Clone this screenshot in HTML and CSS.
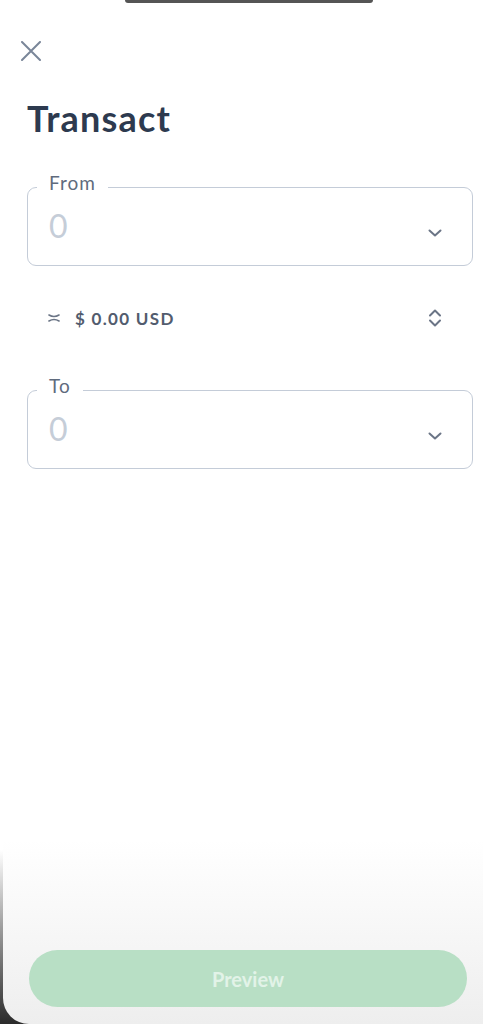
FILE: index.html
```html
<!DOCTYPE html>
<html lang="en">
  <head>
    <meta charset="UTF-8" />
    <meta name="viewport" content="width=device-width, initial-scale=1" />
    <title>Transact</title>
    <link rel="stylesheet" href="styles.css">
  </head>
  <body>
    <div class="screen">
      <div class="notch"></div>

      <button class="close-btn" type="button" aria-label="Close">
        <svg width="20" height="20" viewBox="0 0 20 20" fill="none" stroke="currentColor" stroke-width="2" stroke-linecap="round">
          <path d="M1 1 L19 19 M19 1 L1 19" />
        </svg>
      </button>

      <h1 class="title">Transact</h1>

      <fieldset class="amount-field">
        <legend>From</legend>
        <div class="amount-row">
          <span class="amount-value">0</span>
          <svg class="chevron" width="14" height="8" viewBox="0 0 14 8" fill="none" stroke="currentColor" stroke-width="2" stroke-linecap="round" stroke-linejoin="round">
            <path d="M1.5 1.5 L7 6.5 L12.5 1.5" />
          </svg>
        </div>
      </fieldset>

      <div class="rate-row">
        <svg class="approx" width="12" height="10" viewBox="0 0 12 10" fill="none" stroke="currentColor" stroke-width="1.6" stroke-linecap="round">
          <path d="M1 2 Q6 5 11 2" />
          <path d="M1 8 Q6 5 11 8" />
        </svg>
        <span class="rate-text">$ 0.00 USD</span>
        <svg class="swap" width="14" height="18" viewBox="0 0 14 18" fill="none" stroke="currentColor" stroke-width="2" stroke-linecap="round" stroke-linejoin="round">
          <path d="M2 6.5 L7 1.5 L12 6.5" />
          <path d="M2 11.5 L7 16.5 L12 11.5" />
        </svg>
      </div>

      <fieldset class="amount-field">
        <legend>To</legend>
        <div class="amount-row">
          <span class="amount-value">0</span>
          <svg class="chevron" width="14" height="8" viewBox="0 0 14 8" fill="none" stroke="currentColor" stroke-width="2" stroke-linecap="round" stroke-linejoin="round">
            <path d="M1.5 1.5 L7 6.5 L12.5 1.5" />
          </svg>
        </div>
      </fieldset>

      <button class="preview-btn" type="button" disabled>Preview</button>
    </div>
  </body>
</html>
```

FILE: styles.css
```css
:root {
  --ink: #2d3a4f;
  --muted: #5f6b7d;
  --icon: #6b7586;
  --placeholder: #c5cdd8;
  --border: #c4ccd8;
  --green: #b8dfc5;
}

* {
  box-sizing: border-box;
}

html,
body {
  height: 100%;
}

body {
  margin: 0;
  background: linear-gradient(to bottom, #fff 0, #fff 850px, #9a9a9a 930px, #2a2a2a 1024px);
  font-family: Lato, 'Liberation Sans', sans-serif;
  color: var(--ink);
}

.screen {
  display: flex;
  flex-direction: column;
  min-height: 1024px;
  margin-left: 3px;
  padding: 0 10px 0 24px;
  border-bottom-left-radius: 26px;
  background: linear-gradient(to bottom, #fff 0, #fff 840px, #eeeeee 1024px);
}

.notch {
  width: 248px;
  height: 3px;
  margin-left: 98px;
  border-radius: 0 0 10px 10px;
  background: #555;
}

.close-btn {
  align-self: flex-start;
  width: 20px;
  height: 20px;
  margin: 38px 0 0 -6px;
  padding: 0;
  border: 0;
  background: none;
  color: #7a8699;
}

.close-btn svg {
  display: block;
}

.title {
  margin: 37px 0 36px 0;
  font-size: 36px;
  line-height: 40px;
  font-weight: 700;
  letter-spacing: 1.2px;
  color: var(--ink);
}

.amount-field {
  margin: 0;
  padding: 0 30px 0 9px;
  border: 1.5px solid var(--border);
  border-radius: 9px;
}

.amount-field legend {
  padding: 0 12px 8px 12px;
  font-size: 19px;
  line-height: 18px;
  letter-spacing: 1px;
  color: var(--muted);
}

.amount-row {
  display: flex;
  align-items: center;
  justify-content: space-between;
  height: 65px;
  padding-left: 12px;
}

.amount-value {
  margin-top: -14px;
  font-size: 32px;
  line-height: 36px;
  color: var(--placeholder);
}

.chevron {
  color: var(--icon);
}

.rate-row {
  display: flex;
  align-items: center;
  height: 24px;
  margin: 40px 0 47px 0;
  padding: 0 31px 0 21px;
  color: #4b5567;
}

.approx {
  color: var(--icon);
}

.rate-text {
  margin-left: 15px;
  font-size: 17px;
  font-weight: 700;
  letter-spacing: 1.3px;
  color: #525c6e;
}

.swap {
  margin-left: auto;
  color: var(--icon);
}

.preview-btn {
  width: 438px;
  height: 57px;
  margin: auto 0 17px 2px;
  border: 0;
  border-radius: 29px;
  background: var(--green);
  font-family: Lato, 'Liberation Sans', sans-serif;
  font-size: 20px;
  font-weight: 700;
  color: #e2f3e8;
}
```
